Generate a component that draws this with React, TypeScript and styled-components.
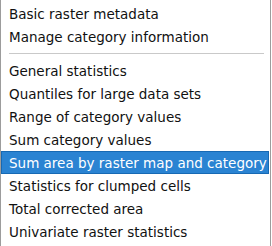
import styled, { createGlobalStyle } from "styled-components";

const GlobalStyle = createGlobalStyle`
  html, body {
    margin: 0;
    padding: 0;
    background: #ffffff;
  }
`;

const Menu = styled.div`
  width: 271px;
  height: 246px;
  box-sizing: border-box;
  background: #ffffff;
  border-left: 1px solid #9c9c9c;
  border-right: 1px solid #9c9c9c;
  padding: 2px 1px 0 0;
  display: flex;
  flex-direction: column;
  overflow: hidden;
  font-family: "DejaVu Sans", sans-serif;
  font-size: 13.5px;
  color: #111111;
`;

const Item = styled.div<{ $active?: boolean }>`
  height: 23px;
  flex-shrink: 0;
  box-sizing: border-box;
  display: flex;
  align-items: center;
  padding-left: 7px;
  white-space: nowrap;
  background: ${(p) => (p.$active ? "#2a83d2" : "transparent")};
  border: 1px solid ${(p) => (p.$active ? "#1769b3" : "transparent")};
  color: ${(p) => (p.$active ? "#ffffff" : "#111111")};
`;

const Separator = styled.div`
  height: 11px;
  flex-shrink: 0;
  display: flex;
  align-items: center;
  padding: 0 5px 0 8px;

  &::after {
    content: "";
    flex: 1;
    height: 1px;
    background: #c9c9c9;
  }
`;

const groups = [
  ["Basic raster metadata", "Manage category information"],
  [
    "General statistics",
    "Quantiles for large data sets",
    "Range of category values",
    "Sum category values",
    "Sum area by raster map and category",
    "Statistics for clumped cells",
    "Total corrected area",
    "Univariate raster statistics",
  ],
];

const activeItem = "Sum area by raster map and category";

export default function App() {
  return (
    <>
      <GlobalStyle />
      <Menu>
        {groups.map((group, i) => (
          <div key={i} style={{ display: "contents" }}>
            {i > 0 && <Separator />}
            {group.map((label) => (
              <Item key={label} $active={label === activeItem}>
                {label}
              </Item>
            ))}
          </div>
        ))}
      </Menu>
    </>
  );
}
